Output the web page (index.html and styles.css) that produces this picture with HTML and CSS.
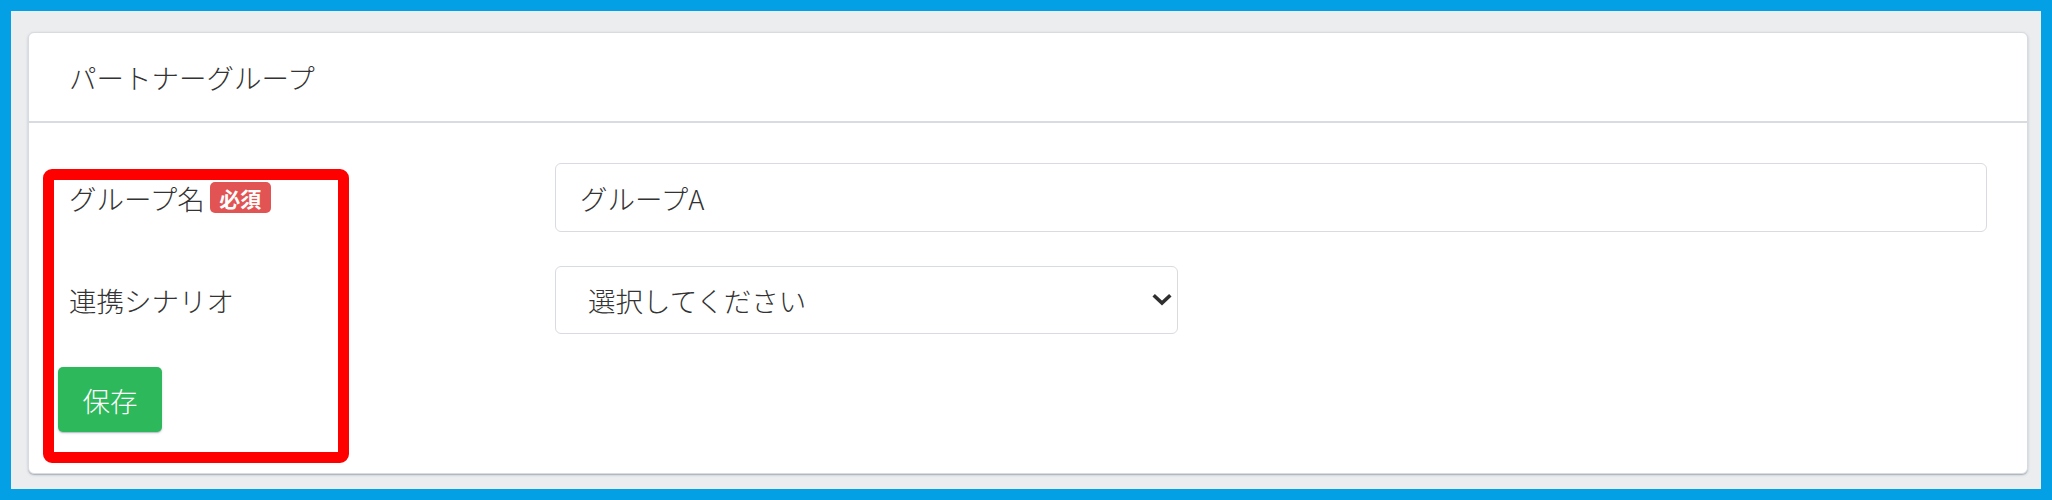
FILE: index.html
```html
<!DOCTYPE html>
<html lang="ja">
<head>
<meta charset="utf-8">
<title>パートナーグループ</title>
<link rel="stylesheet" href="styles.css">
</head>
<body>
<div class="frame">
  <div class="card">
    <div class="card-header">パートナーグループ</div>
    <div class="card-body">
      <div class="form-row">
        <div class="label">グループ名<span class="badge">必須</span></div>
        <div class="field">
          <input class="input" type="text" value="グループA">
        </div>
      </div>
      <div class="form-row">
        <div class="label">連携シナリオ</div>
        <div class="field">
          <div class="select-wrap">
            <select class="select">
              <option>選択してください</option>
            </select>
            <svg class="chev" width="20" height="14" viewBox="0 0 20 14"><path d="M3 3.5 L10 10 L17 3.5" fill="none" stroke="#2f2f2f" stroke-width="3.6" stroke-linecap="square"/></svg>
          </div>
        </div>
      </div>
      <div class="actions">
        <button class="btn">保存</button>
      </div>
    </div>
  </div>
  <div class="highlight"></div>
</div>
</body>
</html>
```
FILE: styles.css
```css
* { box-sizing: border-box; }
html, body { margin: 0; padding: 0; }
body {
  font-family: "Noto Sans CJK JP", "Noto Sans", sans-serif;
  font-weight: 300;
  color: #333;
}
.frame {
  position: relative;
  height: 500px;
  border: 11px solid #03a0e6;
  background: #ebedef;
  padding: 21px 13px 15px 17px;
}
.card {
  background: #fff;
  border: 1px solid #d8dbe0;
  border-radius: 6px;
  box-shadow: 0 1px 1px 0 rgba(60,75,100,.14), 0 2px 1px -1px rgba(60,75,100,.12), 0 1px 3px 0 rgba(60,75,100,.2);
  height: 442px;
  display: flex;
  flex-direction: column;
}
.card-header {
  height: 90px;
  display: flex;
  align-items: center;
  padding: 0 40px;
  font-size: 27.5px;
  border-bottom: 2px solid #d8dbe0;
  flex-shrink: 0;
}
.card-body {
  padding: 40px 40px 40px 29px;
  display: flex;
  flex-direction: column;
}
.form-row {
  display: flex;
  align-items: center;
  margin-bottom: 34px;
}
.form-row + .form-row { margin-bottom: 33px; }
.label {
  width: 497px;
  flex-shrink: 0;
  padding-left: 11px;
  font-size: 27.5px;
  display: flex;
  align-items: center;
}
.badge {
  display: inline-flex;
  align-items: center;
  justify-content: center;
  margin-left: 5px;
  width: 61px;
  height: 31px;
  background: #e25353;
  color: #fff;
  font-weight: 700;
  font-size: 21px;
  border-radius: 5px;
}
.field { flex: 1; }
.input {
  display: block;
  width: 100%;
  height: 69px;
  border: 1px solid #d8dbe0;
  border-radius: 6px;
  padding: 0 24px;
  font-family: inherit;
  font-weight: 300;
  font-size: 27.5px;
  color: #333;
  background: #fff;
  outline: none;
}
.select-wrap {
  position: relative;
  width: 623px;
}
.select {
  display: block;
  width: 100%;
  height: 68px;
  border: 1px solid #d8dbe0;
  border-radius: 6px;
  padding: 0 32px;
  font-family: inherit;
  font-weight: 300;
  font-size: 27.5px;
  color: #333;
  background: #fff;
  appearance: none;
  -webkit-appearance: none;
  outline: none;
}
.chev {
  position: absolute;
  right: 6px;
  top: 27px;
  pointer-events: none;
}
.actions { display: flex; }
.btn {
  width: 104px;
  height: 65px;
  border: none;
  border-radius: 5px;
  background: #2eb85c;
  color: #fff;
  font-family: inherit;
  font-weight: 300;
  font-size: 27.5px;
  box-shadow: 0 1px 1px 0 rgba(60,75,100,.14), 0 2px 1px -1px rgba(60,75,100,.12), 0 1px 3px 0 rgba(60,75,100,.2);
  padding: 0;
}
.highlight {
  position: absolute;
  left: 32px;
  top: 158px;
  width: 306px;
  height: 294px;
  border: 11px solid #ff0000;
  border-radius: 9px;
  pointer-events: none;
}
```
